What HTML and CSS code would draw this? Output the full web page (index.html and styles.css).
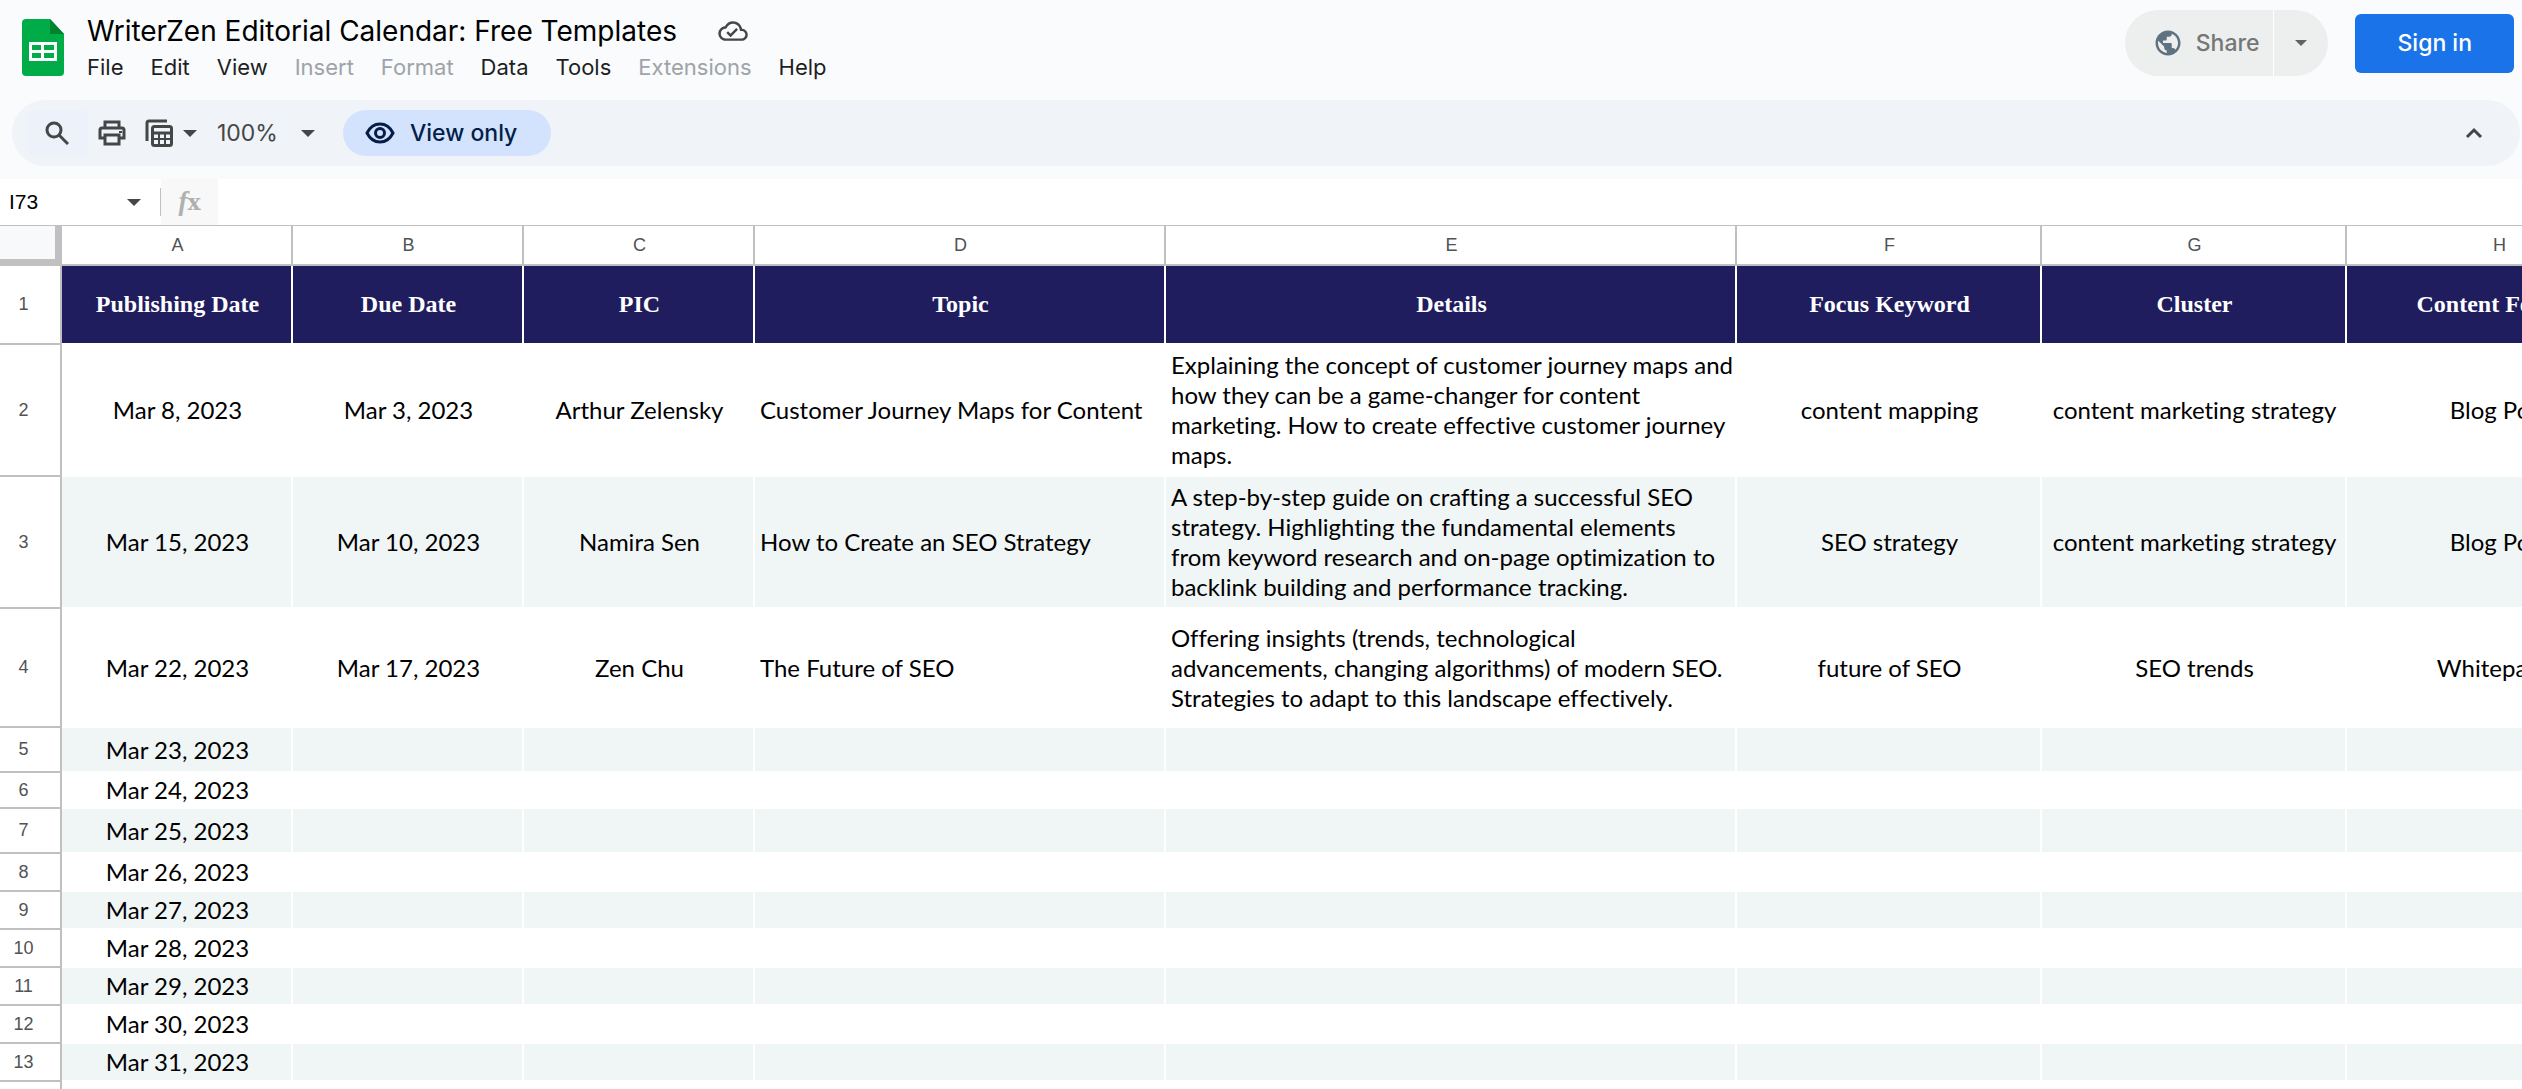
FILE: index.html
```html
<!DOCTYPE html>
<html lang="en">
<head>
<meta charset="utf-8">
<title>WriterZen Editorial Calendar: Free Templates</title>
<link rel="stylesheet" href="styles.css">
</head>
<body>
<header class="header">
  <a class="logo" href="#" aria-label="Sheets home">
    <svg width="42" height="57" viewBox="0 0 42 57"><path fill="#00ac47" d="M4 0h24l14 15v38a4 4 0 0 1-4 4H4a4 4 0 0 1-4-4V4a4 4 0 0 1 4-4z"/><path fill="#00832d" d="M28 0l14 15H28z"/><path fill="#fff" fill-rule="evenodd" d="M7 23h28v19H7zm3 3v5h9v-5zm12 0v5h10v-5zM10 34v5h9v-5zm12 0v5h10v-5z"/></svg>
  </a>
  <div class="heading">
    <div class="title-row">
      <h1 class="title">WriterZen Editorial Calendar: Free Templates</h1>
      <button class="icon-button" aria-label="Document status">
        <svg width="32" height="32" viewBox="0 0 24 24"><path fill="#444746" d="M19.35 10.04C18.67 6.59 15.64 4 12 4 9.11 4 6.6 5.64 5.35 8.04 2.34 8.36 0 10.91 0 14c0 3.310 2.690 6 6 6h13c2.760 0 5-2.240 5-5 0-2.640-2.050-4.780-4.650-4.960zM19 18H6c-2.210 0-4-1.790-4-4 0-2.050 1.530-3.760 3.560-3.970l1.070-.11.5-.95C8.080 7.140 9.940 6 12 6c2.620 0 4.880 1.860 5.390 4.430l.3 1.500 1.530.11c1.560.1 2.780 1.410 2.780 2.960 0 1.650-1.350 3-3 3zm-9-3.820l-2.090-2.090L6.500 13.500 10 17l6.010-6.010-1.410-1.410z" transform="translate(1 1) scale(.92)"/></svg>
      </button>
    </div>
    <nav class="menu" aria-label="Menu">
      <button>File</button><button>Edit</button><button>View</button><button disabled>Insert</button><button disabled>Format</button><button>Data</button><button>Tools</button><button disabled>Extensions</button><button>Help</button>
    </nav>
  </div>
  <div class="actions">
    <div class="share">
      <button class="share-main">
        <svg width="30" height="30" viewBox="0 0 24 24"><path fill="#5f7281" d="M12 2C6.480 2 2 6.480 2 12s4.480 10 10 10 10-4.480 10-10S17.520 2 12 2zm-1 17.930c-3.950-.49-7-3.850-7-7.930 0-.62.080-1.210.21-1.790L9 15v1c0 1.100.9 2 2 2v1.930zm6.900-2.540c-.26-.81-1-1.390-1.900-1.390h-1v-3c0-.55-.45-1-1-1H8v-2h2c.55 0 1-.45 1-1V7h2c1.100 0 2-.9 2-2v-.41c2.930 1.190 5 4.060 5 7.410 0 2.080-.8 3.970-2.100 5.390z"/></svg>
        Share
      </button>
      <button class="share-more" aria-label="Quick sharing actions"><svg width="12" height="6" viewBox="0 0 12 6"><path fill="#5f6368" d="M0 0h12L6 6z"/></svg></button>
    </div>
    <button class="sign-in">Sign in</button>
  </div>
</header>

<div class="toolbar" role="toolbar" aria-label="Toolbar">
  <button class="tool tool-search" aria-label="Search the menus">
    <svg width="24" height="24" viewBox="0 0 24 24" fill="none" stroke="#444746" stroke-width="3"><circle cx="9" cy="9" r="7"/><path d="M14 14l9 9"/></svg>
  </button>
  <button class="tool" aria-label="Print">
    <svg width="28" height="26" viewBox="0 0 28 26" fill="none" stroke="#444746" stroke-width="3"><path d="M7 8V2h14v6M7 18H2v-8q0-2 2-2h20q2 0 2 2v8h-5"/><path d="M7 15h14v9H7z"/><path d="M21 12h3" stroke-width="2"/></svg>
  </button>
  <button class="tool tool-filter" aria-label="Filter views">
    <svg width="28" height="28" viewBox="0 0 28 28" fill="none" stroke="#444746"><path stroke-width="3" d="M22 2H4q-2 0-2 2v18"/><rect x="7.500" y="7.500" width="19" height="19" rx="2" stroke-width="3"/><path stroke-width="3" d="M7 14h20"/><path stroke-width="2" d="M7 20h20M14 14v12M20 14v12"/></svg>
    <svg width="14" height="7" viewBox="0 0 14 7"><path fill="#444746" d="M0 0h14L7 7z"/></svg>
  </button>
  <button class="tool tool-zoom" aria-label="Zoom">100%
    <svg width="14" height="7" viewBox="0 0 14 7"><path fill="#444746" d="M0 0h14L7 7z"/></svg>
  </button>
  <button class="view-only">
    <svg width="30" height="22" viewBox="0 0 30 22" fill="none" stroke="#041e49" stroke-width="3"><path d="M2 11C5 5 9 2 15 2s10 3 13 9c-3 6-7 9-13 9S5 17 2 11z"/><circle cx="15" cy="11" r="4.500"/></svg>
    View only
  </button>
  <button class="tool tool-collapse" aria-label="Hide the menus">
    <svg width="18" height="12" viewBox="0 0 18 12" fill="none" stroke="#444746" stroke-width="3"><path d="M2 10l7-7 7 7"/></svg>
  </button>
</div>

<div class="formula-bar">
  <div class="name-box">
    <input class="name-input" type="text" value="I73" aria-label="Name box">
    <svg width="14" height="7" viewBox="0 0 14 7"><path fill="#444746" d="M0 0h14L7 7z"/></svg>
  </div>
  <div class="divider"></div>
  <label class="fx" for="formula"><i>f</i><span class="fx-x">x</span></label>
  <input class="formula" id="formula" type="text">
</div>

<main class="sheet">
  <table class="grid">
    <colgroup><col class="w-index"><col class="w-small"><col class="w-small"><col class="w-small"><col class="w-topic"><col class="w-details"><col class="w-medium"><col class="w-medium"><col class="w-medium"></colgroup>
    <thead>
      <tr class="letters"><td class="corner"></td><th>A</th><th>B</th><th>C</th><th>D</th><th>E</th><th>F</th><th>G</th><th>H</th></tr>
    </thead>
    <tbody>
      <tr class="titles"><th class="index">1</th><td>Publishing Date</td><td>Due Date</td><td>PIC</td><td>Topic</td><td>Details</td><td>Focus Keyword</td><td>Cluster</td><td>Content Format</td></tr>
      <tr style="height:132px"><th class="index">2</th><td>Mar 8, 2023</td><td>Mar 3, 2023</td><td>Arthur Zelensky</td><td class="text">Customer Journey Maps for Content</td><td class="text">Explaining the concept of customer journey maps and<br>how they can be a game-changer for content<br>marketing. How to create effective customer journey<br>maps.</td><td>content mapping</td><td>content marketing strategy</td><td>Blog Post</td></tr>
      <tr style="height:132px"><th class="index">3</th><td>Mar 15, 2023</td><td>Mar 10, 2023</td><td>Namira Sen</td><td class="text">How to Create an SEO Strategy</td><td class="text">A step-by-step guide on crafting a successful SEO<br>strategy. Highlighting the fundamental elements<br>from keyword research and on-page optimization to<br>backlink building and performance tracking.</td><td>SEO strategy</td><td>content marketing strategy</td><td>Blog Post</td></tr>
      <tr style="height:119px"><th class="index">4</th><td>Mar 22, 2023</td><td>Mar 17, 2023</td><td>Zen Chu</td><td class="text">The Future of SEO</td><td class="text">Offering insights (trends, technological<br>advancements, changing algorithms) of modern SEO.<br>Strategies to adapt to this landscape effectively.</td><td>future of SEO</td><td>SEO trends</td><td>Whitepaper</td></tr>
      <tr style="height:45px"><th class="index">5</th><td>Mar 23, 2023</td><td></td><td></td><td></td><td></td><td></td><td></td><td></td></tr>
      <tr style="height:36px"><th class="index">6</th><td>Mar 24, 2023</td><td></td><td></td><td></td><td></td><td></td><td></td><td></td></tr>
      <tr style="height:45px"><th class="index">7</th><td>Mar 25, 2023</td><td></td><td></td><td></td><td></td><td></td><td></td><td></td></tr>
      <tr style="height:38px"><th class="index">8</th><td>Mar 26, 2023</td><td></td><td></td><td></td><td></td><td></td><td></td><td></td></tr>
      <tr style="height:38px"><th class="index">9</th><td>Mar 27, 2023</td><td></td><td></td><td></td><td></td><td></td><td></td><td></td></tr>
      <tr style="height:38px"><th class="index">10</th><td>Mar 28, 2023</td><td></td><td></td><td></td><td></td><td></td><td></td><td></td></tr>
      <tr style="height:38px"><th class="index">11</th><td>Mar 29, 2023</td><td></td><td></td><td></td><td></td><td></td><td></td><td></td></tr>
      <tr style="height:38px"><th class="index">12</th><td>Mar 30, 2023</td><td></td><td></td><td></td><td></td><td></td><td></td><td></td></tr>
      <tr style="height:38px"><th class="index">13</th><td>Mar 31, 2023</td><td></td><td></td><td></td><td></td><td></td><td></td><td></td></tr>
      <tr style="height:38px"><th class="index"></th><td></td><td></td><td></td><td></td><td></td><td></td><td></td><td></td></tr>
    </tbody>
  </table>
</main>
</body>
</html>
```

FILE: styles.css
```css
* { box-sizing: border-box; }

body {
  margin: 0;
  height: 100vh;
  overflow: hidden;
  display: flex;
  flex-direction: column;
  background: #f9fbfd;
  color: #000;
  font-family: Inter, "Liberation Sans", sans-serif;
}

button {
  border: 0;
  padding: 0;
  background: none;
  font: inherit;
  color: inherit;
}

svg { display: block; flex: none; }

/* Header */
.header {
  flex: none;
  display: flex;
  align-items: flex-start;
  padding: 10px 8px 0 22px;
  height: 100px;
}

.logo { margin-top: 9px; }

.heading { margin-left: 23px; }

.title-row {
  display: flex;
  align-items: center;
  gap: 40px;
}

.title {
  margin: 0;
  font-size: 28px;
  font-weight: 400;
  line-height: 42px;
  white-space: nowrap;
}

.menu {
  display: flex;
  gap: 27px;
  color: #1f1f1f;
  font-size: 22px;
  line-height: 30px;
}

.menu button:disabled { color: #9fa3a7; }

.actions {
  display: flex;
  align-items: center;
  gap: 27px;
  margin-left: auto;
  font-size: 23px;
  font-weight: 500;
}

.share {
  display: flex;
  height: 66px;
  border-radius: 33px;
  overflow: hidden;
  background: #edeeee;
  color: #747775;
}

.share-main {
  display: flex;
  align-items: center;
  gap: 13px;
  padding: 0 14px 0 28px;
}

.share-more {
  display: flex;
  align-items: center;
  padding: 0 21px;
  border-left: 1px solid #fff;
}

.sign-in {
  height: 59px;
  padding: 0 42px;
  border-radius: 6px;
  background: #1a73e8;
  color: #fff;
}

/* Toolbar */
.toolbar {
  flex: none;
  display: flex;
  align-items: center;
  height: 66px;
  margin: 0 2px 0 12px;
  padding: 0 37px 0 16px;
  border-radius: 33px;
  background: #f0f3f8;
  color: #444746;
  font-size: 23px;
}

.tool {
  display: flex;
  align-items: center;
  height: 46px;
}

.tool-search {
  width: 60px;
  margin-right: 10px;
  padding-left: 17px;
  border-radius: 6px;
  background: #ecf1fa;
}

.tool-filter { margin-left: 19px; gap: 10px; }

.tool-zoom { margin-left: 20px; gap: 23px; }

.tool-collapse { margin-left: auto; }

.view-only {
  display: flex;
  align-items: center;
  gap: 15px;
  height: 46px;
  margin-left: 28px;
  padding: 0 34px 0 22px;
  border-radius: 23px;
  background: #d3e3fd;
  color: #041e49;
  font-weight: 500;
}

/* Formula bar */
.formula-bar {
  flex: none;
  display: flex;
  height: 47px;
  margin-top: 13px;
  border-bottom: 1px solid #c0c0c0;
  background: #fff;
}

.name-box {
  display: flex;
  align-items: center;
  justify-content: space-between;
  width: 160px;
  padding: 0 19px 0 9px;
}

.name-input {
  width: 100px;
  padding: 0;
  border: 0;
  background: none;
  font: 21px "Liberation Sans", sans-serif;
}

.divider {
  align-self: center;
  width: 1px;
  height: 28px;
  background: #c0c0c0;
}

.fx {
  display: flex;
  align-items: baseline;
  justify-content: center;
  width: 57px;
  background: #f8f8f8;
  color: #b0b0b0;
  font: bold 27px/45px "Liberation Serif", serif;
}

.fx-x { font: bold 22px "DejaVu Serif", serif; }

.formula {
  flex: 1;
  padding: 0 8px;
  border: 0;
  background: #fff;
  font: 21px "Liberation Sans", sans-serif;
}

/* Grid */
.sheet {
  flex: 1;
  min-height: 0;
  overflow: hidden;
  background: #fff;
}

.grid {
  width: 0;
  table-layout: fixed;
  border-spacing: 0;
  font: 24px/30px Lato, sans-serif;
  font-variant-ligatures: none;
}

.w-index { width: 62px; }
.w-small { width: 231px; }
.w-topic { width: 411px; }
.w-details { width: 571px; }
.w-medium { width: 305px; }

.grid td {
  padding: 0 0 0 2px;
  border: 0 solid #fff;
  border-width: 0 2px 2px 0;
  text-align: center;
  white-space: nowrap;
}

.grid .text {
  padding-left: 5px;
  text-align: left;
}

.grid th {
  padding: 0 0 0 2px;
  border: 0 solid #c0c0c0;
  border-width: 0 2px 2px 0;
  background: #fff;
  color: #505356;
  font: 18px "Liberation Sans", sans-serif;
}

.grid .index { padding: 0 13px 0 0; }

.letters { height: 40px; }

.grid .corner {
  border-color: #c0c0c0;
  border-width: 0 7px 7px 0;
  background: #f8f9fa;
}

.titles { height: 79px; }

.grid .titles td {
  background: #201d5e;
  color: #fff;
  font: bold 24px "Liberation Serif", serif;
}

tbody tr:nth-child(n+3):nth-child(odd) td { background: #f0f5f5; }
```
